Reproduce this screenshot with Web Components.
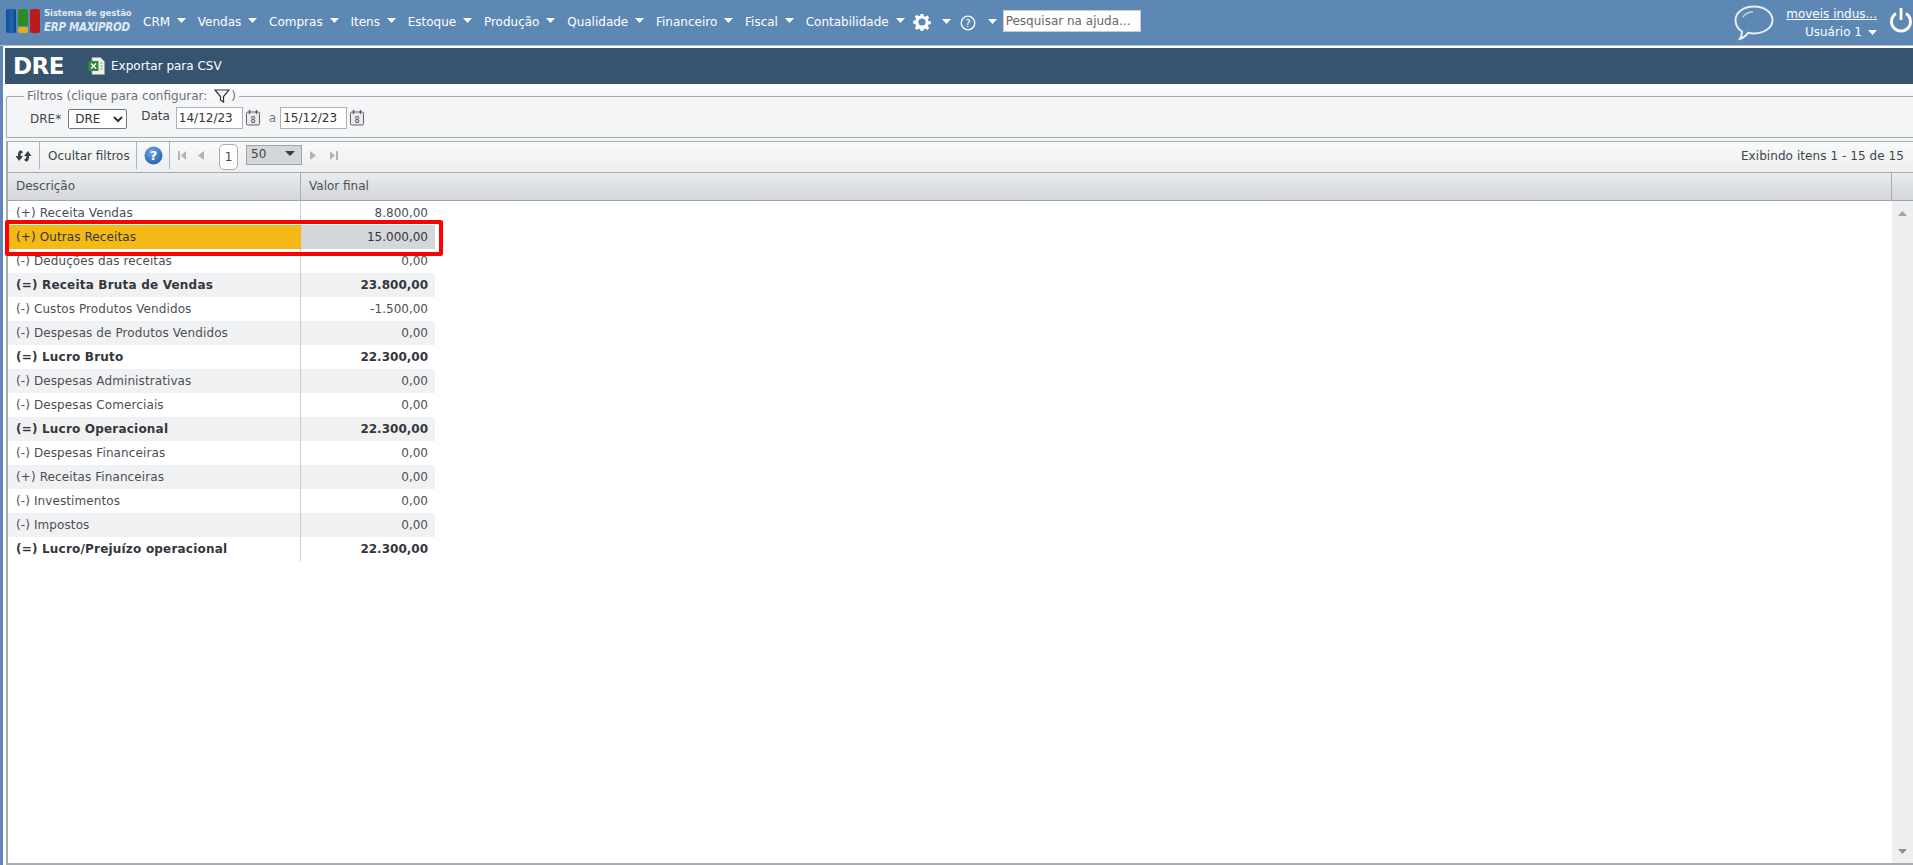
<!DOCTYPE html>
<html lang="pt-BR">
<head>
<meta charset="utf-8">
<title>DRE</title>
<style>
html, body { margin: 0; height: 100%; overflow: hidden; background: #fff; }
body { font-family: "DejaVu Sans", sans-serif; font-size: 12px; color: #3a3f45; }
</style>
</head>
<body>
<erp-app>
  <erp-topbar slot="top"></erp-topbar>
  <erp-title slot="title"></erp-title>
  <erp-filters slot="filters"></erp-filters>
  <erp-toolbar slot="toolbar"></erp-toolbar>
  <dre-grid slot="grid"></dre-grid>
</erp-app>
<script>
const caret = (c = '#fff') => `<svg width="9" height="5" viewBox="0 0 9 5"><path d="M0 0h9L4.500 5z" fill="${c}"/></svg>`;

customElements.define('erp-app', class extends HTMLElement {
  constructor() {
    super();
    this.attachShadow({ mode: 'open' });
    this.shadowRoot.innerHTML = `
<style>
:host { display: flex; flex-direction: column; height: 865px; background: #5d88b3; }
.main { flex: 1; min-height: 0; margin-left: 3px; background: #fff; display: flex; flex-direction: column; padding: 2px 0 0 2px; }
</style>
<slot name="top"></slot>
<div class="main">
  <slot name="title"></slot>
  <slot name="filters"></slot>
  <slot name="toolbar"></slot>
  <slot name="grid"></slot>
</div>`;
  }
});

customElements.define('nav-item', class extends HTMLElement {
  constructor() {
    super();
    this.attachShadow({ mode: 'open' });
    this.shadowRoot.innerHTML = `
<style>
:host { display: inline-flex; align-items: center; gap: 7px; color: #fff; white-space: nowrap; font-size: 12px; }
svg { margin-top: -3px; }
</style>
<slot></slot>${caret()}`;
  }
});

customElements.define('erp-topbar', class extends HTMLElement {
  constructor() {
    super();
    this.attachShadow({ mode: 'open' });
    this.shadowRoot.innerHTML = `
<style>
:host { display: flex; height: 45px; flex: none; background: #5d88b3; border-bottom: 1px solid #b4bcc6; position: relative; font-family: "DejaVu Sans", sans-serif; }
.logo { display: flex; width: 143px; flex: none; padding: 9px 0 0 6px; box-sizing: border-box; }
.bars { display: flex; gap: 2px; height: 24px; flex: none; }
.bars i { display: block; width: 10px; border-radius: 2px; }
.stack { display: flex; flex-direction: column; gap: 1px; width: 10px; }
.lt { color: #dfe8f0; margin-left: 4px; margin-top: -3px; white-space: nowrap; }
.lt b { display: block; font-weight: 700; font-size: 9.500px; font-stretch: condensed; line-height: 14px; letter-spacing: -.1px; }
.lt em { display: block; font-weight: 700; font-size: 11.500px; font-stretch: condensed; line-height: 15px; letter-spacing: -.3px; }
nav { display: flex; align-items: center; height: 100%; flex: none; }
nav-item { margin-right: 11.750px; margin-top: -2px; }
.tools { display: flex; align-items: center; margin-top: -2px; }
input { width: 138px; height: 22px; box-sizing: border-box; border: 1px solid #c8ccd0; padding: 0 2px; margin: -2px 0 0 6px; font: 12px "DejaVu Sans", sans-serif; color: #8a6d55; }
input::placeholder { color: #6d665f; opacity: 1; }
.user { margin-left: auto; display: flex; align-items: flex-start; color: #fff; }
.who { margin: 7px 0 0 11px; display: flex; flex-direction: column; align-items: flex-end; font-size: 12px; }
.who a { color: #fff; text-decoration: underline; line-height: 14px; }
.who span { margin-top: 4px; line-height: 14px; display: flex; align-items: center; gap: 6px; }
.power { margin: 7px 0 0 12px; display: block; }
.chat { margin-top: 4px; }
</style>
<div class="logo">
  <div class="bars">
    <i style="background:linear-gradient(90deg,#154c96,#1b69b8 60%,#12437f)"></i>
    <span class="stack"><i style="flex:1;width:100%;background:#2f8a1f"></i><i style="height:6px;width:100%;background:#e8ab1c"></i></span>
    <i style="background:#bd1a1e"></i>
  </div>
  <div class="lt"><b>Sistema de gestão</b><em>ERP MAXIPROD</em></div>
</div>
<nav>
  <nav-item>CRM</nav-item><nav-item>Vendas</nav-item><nav-item>Compras</nav-item><nav-item>Itens</nav-item><nav-item>Estoque</nav-item><nav-item>Produção</nav-item><nav-item>Qualidade</nav-item><nav-item>Financeiro</nav-item><nav-item>Fiscal</nav-item><nav-item style="margin-right:8px">Contabilidade</nav-item>
</nav>
<div class="tools">
  <svg width="18" height="18" viewBox="0 0 18 18"><path fill-rule="evenodd" d="M7.500 0h3l.5 2.600 1.700.7 2.200-1.500 2.100 2.100-1.500 2.200.7 1.700 2.600.5v3l-2.600.5-.7 1.700 1.500 2.200-2.100 2.100-2.200-1.500-1.700.7-.5 2.600h-3l-.5-2.600-1.700-.7-2.200 1.500-2.100-2.100 1.500-2.200-.7-1.700L-.8 10.500v-3l2.600-.5.7-1.700-1.500-2.200 2.100-2.100 2.200 1.500 1.700-.7zM9 5a4 4 0 1 0 0 8 4 4 0 0 0 0-8z" fill="#fff" transform="translate(.9 .9) scale(.9)"/></svg>
  <span style="margin:0 9px 0 11px;display:flex">${caret()}</span>
  <svg width="16" height="16" viewBox="0 0 16 16" style="margin-top:2px"><circle cx="8" cy="8" r="6.800" fill="none" stroke="#fff" stroke-width="1.300"/><text x="8" y="11.500" text-anchor="middle" font-size="10" font-family="DejaVu Sans" fill="#fff">?</text></svg>
  <span style="margin:0 0 0 12px;display:flex">${caret()}</span>
  <input placeholder="Pesquisar na ajuda...">
</div>
<div class="user">
  <svg class="chat" width="42" height="38" viewBox="0 0 42 38"><path d="M21 2.500c10.500 0 18.500 6 18.500 13.500S31.500 29.500 21 29.500c-2 0-4-.2-5.800-.7-2 2.700-4.700 5-8.200 6 1.300-2 2-4.300 2-7.300C5 25 2.500 20.800 2.500 16 2.500 8.500 10.500 2.500 21 2.500z" fill="none" stroke="#e6edf4" stroke-width="2"/><path d="M10 13c2-3 6-5 10-5" fill="none" stroke="#c3d3e2" stroke-width="1.500"/></svg>
  <div class="who"><a>moveis indus...</a><span>Usuário 1 ${caret()}</span></div>
  <svg class="power" width="24" height="26" viewBox="0 0 24 26"><path d="M7 6.500a9.500 9.500 0 1 0 10 0" fill="none" stroke="#fff" stroke-width="2.800"/><path d="M12 1v12" stroke="#fff" stroke-width="2.800"/></svg>
</div>`;
  }
});

customElements.define('erp-title', class extends HTMLElement {
  constructor() {
    super();
    this.attachShadow({ mode: 'open' });
    this.shadowRoot.innerHTML = `
<style>
:host { display: flex; align-items: center; height: 36px; flex: none; background: #36536f; color: #fff; }
h1 { margin: 0 0 0 8px; width: 75px; font: 700 23px "DejaVu Sans", sans-serif; letter-spacing: -.5px; }
span { font-size: 12px; margin-left: 6px; }
svg { display: block; }
</style>
<h1>DRE</h1>
<svg width="17" height="18" viewBox="0 0 17 18"><path d="M4 .5h8.500L16.500 4.500v13H4z" fill="#eef0ec" stroke="#9aa39a"/><rect x="0.500" y="4" width="10" height="10" fill="#2f8a3a"/><path d="M3 6.500l5 5m0-5l-5 5" stroke="#fff" stroke-width="1.300"/><path d="M12 6h3M12 9h3M12 12h3" stroke="#8fb08f"/></svg>
<span>Exportar para CSV</span>`;
  }
});

customElements.define('erp-filters', class extends HTMLElement {
  constructor() {
    super();
    this.attachShadow({ mode: 'open' });
    const cal = `<svg width="16" height="18" viewBox="0 0 16 18"><rect x="1.500" y="3" width="13" height="13" rx="1.500" fill="#e9ebed" stroke="#5e6266"/><path d="M4.500 1v4M11.500 1v4" stroke="#5e6266" stroke-width="1.500"/><text x="8" y="14" text-anchor="middle" font-size="8" font-family="DejaVu Sans" fill="#444">8</text></svg>`;
    this.shadowRoot.innerHTML = `
<style>
:host { display: block; flex: none; height: 57px; background: linear-gradient(#fff,#f4f5f6 30%); font-family: "DejaVu Sans", sans-serif; font-size: 12px; color: #3f454b; }
fieldset { margin: 0; padding: 0; height: 34px; box-sizing: content-box; position: relative; top: 5px; margin-left: 1px; border: 0; border-top: 1px solid #a7acb1; border-left: 1px solid #a7acb1; border-bottom: 1px solid #a7acb1; border-radius: 3px 0 0 0; }
legend { margin-left: 17px; padding: 0 3px; display: flex; align-items: center; line-height: 14px; color: #6b7076; font-size: 12px; }
legend svg { margin: 0 0 0 7px; }
.row { display: flex; align-items: center; padding-left: 23px; height: 24px; margin-top: 3px; }
select { width: 59px; height: 20px; margin: 2px 0 0 7px; font: 12px "DejaVu Sans", sans-serif; background: #fff; border: 1px solid #73777b; border-radius: 2px; color: #333; padding: 0 0 0 2px; }
.data { margin: -4px 6px 0 14px; font-size: 12px; }
input { width: 67px; height: 22px; box-sizing: border-box; border: 1px solid #aeb2b6; padding: 0 2px; font: 12px "DejaVu Sans", sans-serif; color: #333; background: #fff; }
.cal { margin-left: 2px; display: flex; }
.a { margin: 0 4px 0 8px; color: #777; font-size: 12px; }
.lbl { font-size: 12px; margin-top: 2px; }
</style>
<fieldset style="height:47px">
  <legend>Filtros (clique para configurar:<svg width="16" height="14" viewBox="0 0 16 14"><path d="M1 1h14L9.500 7.500V13L6.500 11V7.500z" fill="none" stroke="#333" stroke-width="1.200"/></svg><span style="margin-left:1px">)</span></legend>
  <div class="row">
    <span class="lbl">DRE*</span>
    <select><option>DRE</option></select>
    <span class="data">Data</span>
    <input value="14/12/23"><span class="cal">${cal}</span>
    <span class="a">a</span>
    <input value="15/12/23"><span class="cal">${cal}</span>
  </div>
</fieldset>`;
  }
});

customElements.define('erp-toolbar', class extends HTMLElement {
  constructor() {
    super();
    this.attachShadow({ mode: 'open' });
    this.shadowRoot.innerHTML = `
<style>
:host { display: flex; align-items: center; height: 30px; flex: none; margin-left: 1px; box-sizing: content-box; border-top: 1px solid #a7acb1; border-left: 2px solid #a7acb1; background: linear-gradient(#f8f9f9,#eceef0); font-family: "DejaVu Sans", sans-serif; font-size: 12px; color: #3f454b; position: relative; }
.cell { display: flex; align-items: center; height: 27px; align-self: flex-start; border-right: 1px solid #b0b4b8; flex: none; box-sizing: border-box; }
svg { display: block; flex: none; }
.nudge { margin-top: -3px; }
.page { width: 19px; height: 26px; box-sizing: border-box; border: 1px solid #a7acb1; border-radius: 5px; background: #fff; display: flex; align-items: center; justify-content: center; margin-left: 15px; font-size: 12px; }
.size { width: 56px; height: 20px; box-sizing: border-box; border: 1px solid #a0a4a8; background: #d4d7da; margin: -5px 0 0 8px; padding: 0 6px 2px 4px; display: flex; align-items: center; justify-content: space-between; font-size: 12px; }
.info { margin-left: auto; margin-right: 9px; font-size: 12px; margin-top: -3px; letter-spacing: .07px; }
</style>
<div class="cell" style="width:32px;padding-left:7px">
  <svg width="17" height="14" viewBox="0 0 17 14"><path d="M8 3.500C7 1.800 5.800 1.300 4.700 1.800 3.200 2.500 3 4.500 3 7H.5l3.700 5L8 7H5.600c0-1.500.3-2.500 1.100-3zM9 10.500c1 1.700 2.200 2.200 3.300 1.700 1.500-.7 1.700-2.700 1.700-5.200h2.500L12.800 2 9 7h2.400c0 1.500-.3 2.500-1.100 3z" fill="#3a3f43"/></svg>
</div>
<div class="cell" style="width:97px;padding-left:8px">Ocultar filtros</div>
<div class="cell" style="width:33px;padding-left:7px">
  <svg width="19" height="19" viewBox="0 0 19 19"><defs><radialGradient id="h" cx=".4" cy=".3" r=".8"><stop offset="0" stop-color="#6ea3e2"/><stop offset="1" stop-color="#1b5dab"/></radialGradient></defs><circle cx="9.500" cy="9.500" r="9" fill="url(#h)"/><text x="9.500" y="14" text-anchor="middle" font-size="13" font-weight="700" font-family="DejaVu Sans" fill="#fff">?</text></svg>
</div>
<svg class="nudge" style="margin-left:8px" width="8" height="9" viewBox="0 0 8 9"><path d="M0 0h2v9H0zM8 0v9L3 4.500z" fill="#b0b4b8"/></svg>
<svg class="nudge" style="margin-left:12px" width="6" height="9" viewBox="0 0 6 9"><path d="M6 0v9L0 4.500z" fill="#b0b4b8"/></svg>
<div class="page">1</div>
<div class="size"><span>50</span><svg width="10" height="5" viewBox="0 0 10 5"><path d="M0 0h10L5 5z" fill="#3a3f45"/></svg></div>
<svg class="nudge" style="margin-left:8px" width="6" height="9" viewBox="0 0 6 9"><path d="M0 0v9l6-4.500z" fill="#b0b4b8"/></svg>
<svg class="nudge" style="margin-left:14px" width="8" height="9" viewBox="0 0 8 9"><path d="M0 0v9l5-4.500zM6 0h2v9H6z" fill="#b0b4b8"/></svg>
<span class="info">Exibindo itens 1 - 15 de 15</span>`;
  }
});

customElements.define('dre-row', class extends HTMLElement {
  constructor() {
    super();
    this.attachShadow({ mode: 'open' });
    this.shadowRoot.innerHTML = `
<style>
:host { display: grid; grid-template-columns: 293px 134px; width: 427px; height: 24px; line-height: 24px; font-size: 12px; color: #4a4f55; background: #fff; letter-spacing: .1px; }
:host([alt]) { background: #f0f1f3; }
:host([total]) { font-weight: 700; color: #33373c; letter-spacing: .2px; }
:host([sel]) { color: #33373c; background: #d3d6db; }
.d { padding-left: 8px; border-right: 1px solid #c9ccd0; white-space: nowrap; box-sizing: border-box; }
:host([sel]) .d { background: #f4b916; border-right: 0; }
.v { text-align: right; padding-right: 7px; letter-spacing: 0; }
</style>
<div class="d"><slot></slot></div><div class="v"></div>`;
  }
  connectedCallback() {
    this.shadowRoot.querySelector('.v').textContent = this.getAttribute('value') || '';
  }
});

customElements.define('dre-grid', class extends HTMLElement {
  constructor() {
    super();
    this.attachShadow({ mode: 'open' });
    const rows = [
      ['(+) Receita Vendas', '8.800,00'],
      ['(+) Outras Receitas', '15.000,00', 'sel'],
      ['(-) Deduções das receitas', '0,00'],
      ['(=) Receita Bruta de Vendas', '23.800,00', 'total alt'],
      ['(-) Custos Produtos Vendidos', '-1.500,00'],
      ['(-) Despesas de Produtos Vendidos', '0,00', 'alt'],
      ['(=) Lucro Bruto', '22.300,00', 'total'],
      ['(-) Despesas Administrativas', '0,00', 'alt'],
      ['(-) Despesas Comerciais', '0,00'],
      ['(=) Lucro Operacional', '22.300,00', 'total alt'],
      ['(-) Despesas Financeiras', '0,00'],
      ['(+) Receitas Financeiras', '0,00', 'alt'],
      ['(-) Investimentos', '0,00'],
      ['(-) Impostos', '0,00', 'alt'],
      ['(=) Lucro/Prejuízo operacional', '22.300,00', 'total']
    ];
    this.shadowRoot.innerHTML = `
<style>
:host { display: flex; flex-direction: column; flex: 1; min-height: 0; margin-left: 1px; border-left: 2px solid #a7acb1; border-bottom: 2px solid #a7acb1; font-family: "DejaVu Sans", sans-serif; font-size: 12px; }
.head { display: flex; height: 29px; flex: none; box-sizing: border-box; border-top: 1px solid #a7acb1; border-bottom: 1px solid #a0a5aa; background: linear-gradient(#eaecee,#d3d6da); color: #4a4f55; line-height: 26px; }
.head div { border-right: 1px solid #a7acb1; padding-left: 8px; box-sizing: border-box; }
.head .last { flex: 1; border: 0; padding: 0; }
.body { flex: 1; min-height: 0; display: flex; position: relative; }
.rows { flex: 1; }
.bar { width: 21px; flex: none; background: #efefef; display: flex; flex-direction: column; justify-content: space-between; align-items: center; padding: 10px 0 9px; box-sizing: border-box; }
.mark { position: absolute; left: -3px; top: 19px; width: 438px; height: 36px; box-sizing: border-box; border: 4px solid #f00; border-radius: 2px; }
</style>
<div class="head"><div style="width:293px">Descrição</div><div style="width:1591px">Valor final</div><div class="last"></div></div>
<div class="body">
  <div class="rows">${rows.map(r => `<dre-row value="${r[1]}" ${r[2] || ''}>${r[0]}</dre-row>`).join('')}</div>
  <div class="bar"><svg width="9" height="5" viewBox="0 0 9 5"><path d="M0 5h9L4.500 0z" fill="#a3a3a3"/></svg><svg width="9" height="5" viewBox="0 0 9 5"><path d="M0 0h9L4.500 5z" fill="#8e8e8e"/></svg></div>
  <div class="mark"></div>
</div>`;
  }
});
</script>
</body>
</html>
